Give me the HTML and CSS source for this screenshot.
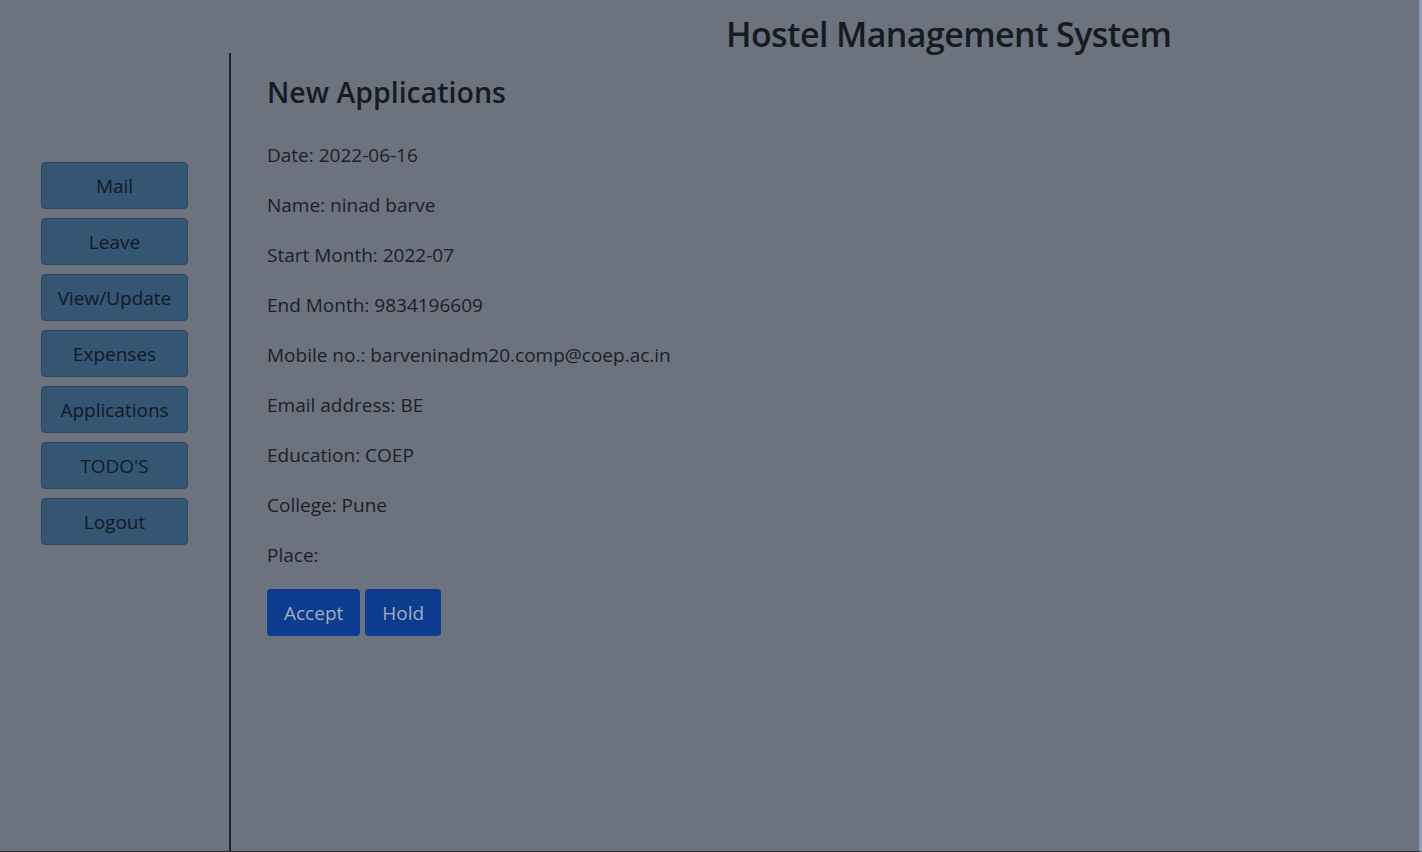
FILE: index.html
```html
<!DOCTYPE html>
<html lang="en">
<head>
<meta charset="utf-8">
<title>Hostel Management System</title>
<link rel="stylesheet" href="styles.css">
</head>
<body>
<div class="page">
  <header class="top">
    <h1 class="title">Hostel Management System</h1>
  </header>
  <div class="layout">
    <nav class="sidebar">
      <button class="nav-btn">Mail</button>
      <button class="nav-btn">Leave</button>
      <button class="nav-btn">View/Update</button>
      <button class="nav-btn">Expenses</button>
      <button class="nav-btn">Applications</button>
      <button class="nav-btn">TODO'S</button>
      <button class="nav-btn">Logout</button>
    </nav>
    <main class="main">
      <h2 class="heading">New Applications</h2>
      <p class="field">Date: 2022-06-16</p>
      <p class="field">Name: ninad barve</p>
      <p class="field">Start Month: 2022-07</p>
      <p class="field">End Month: 9834196609</p>
      <p class="field">Mobile no.: barveninadm20.comp@coep.ac.in</p>
      <p class="field">Email address: BE</p>
      <p class="field">Education: COEP</p>
      <p class="field">College: Pune</p>
      <p class="field">Place:</p>
      <div class="actions">
        <button class="act-btn">Accept</button>
        <button class="act-btn">Hold</button>
      </div>
    </main>
  </div>
</div>
</body>
</html>
```

FILE: styles.css
```css
html, body {
  margin: 0;
  padding: 0;
  height: 100%;
}
body {
  background: #6c737e;
  font-family: "Open Sans", "Noto Sans", sans-serif;
  color: #1b2028;
}
.page {
  height: 852px;
  box-sizing: border-box;
  border-right: 3px solid #8e9db6;
  border-bottom: 1px solid #2b3038;
  display: flex;
  flex-direction: column;
  overflow: hidden;
}
.top {
  height: 53px;
  box-sizing: border-box;
  padding-left: 726px;
  padding-top: 15px;
}
.title {
  margin: 0;
  font-size: 34px;
  font-weight: 600;
  letter-spacing: -0.6px;
  line-height: 38px;
  color: #161b22;
}
.layout {
  flex: 1;
  display: flex;
}
.sidebar {
  width: 229px;
  flex: none;
  padding-top: 109px;
  display: flex;
  flex-direction: column;
  align-items: center;
  gap: 9px;
}
.nav-btn {
  width: 147px;
  height: 47px;
  box-sizing: border-box;
  background: #355673;
  border: 1px solid #2b4861;
  border-radius: 4px;
  font-family: inherit;
  font-size: 19px;
  color: #0f1a27;
  padding: 0;
  line-height: 47px;
}
.main {
  flex: 1;
  border-left: 2px solid #1b222b;
  padding-left: 36px;
  padding-top: 18px;
}
.heading {
  margin: 0 0 27px;
  font-size: 28.5px;
  font-weight: 600;
  line-height: 42px;
  color: #161b22;
}
.field {
  margin: 0 0 20px;
  font-size: 19px;
  line-height: 30px;
}
.actions {
  display: flex;
  gap: 5px;
  margin-top: -1px;
}
.act-btn {
  height: 47px;
  box-sizing: border-box;
  background: #0b3c8e;
  border: none;
  border-radius: 4px;
  color: #a3adbb;
  font-family: inherit;
  font-size: 19px;
  padding: 0 17px;
}
```
